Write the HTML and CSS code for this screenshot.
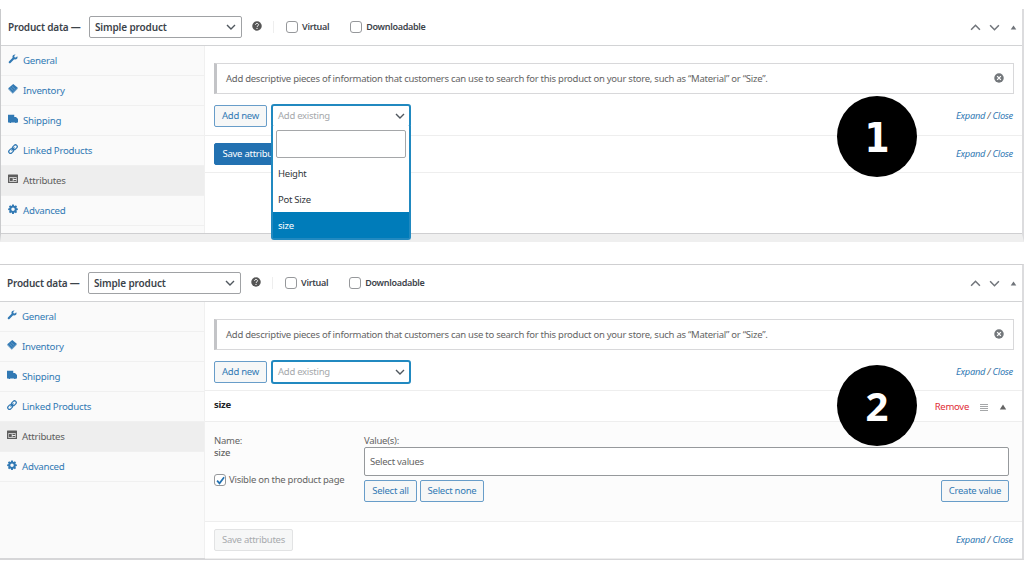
FILE: index.html
```
<!DOCTYPE html>
<html lang="en">
<head>
    <meta charset="UTF-8">
    <meta name="viewport" content="width=device-width, initial-scale=1.0">
    <title>Product data - Attributes</title>
    <link rel="stylesheet" href="styles.css">
</head>
<body>
    <!-- Shared icons -->
    <svg class="sprite" width="0" height="0">
        <symbol id="wrench" viewBox="0 0 20 20"><path d="M18.500 8.800c-1.700 2.200-4 2.700-6.200 1.900L5 18c-.8.800-2.300.8-3.100 0s-.8-2.300 0-3.100l7.300-7.300c-.8-2.200-.2-4.500 1.600-5.800C12 .8 13.700.5 15.200 1L12.400 4l.6 2.500 2.600.7L18.600 4.300c.6 1.500.7 3.200-.1 4.500z"/></symbol>
        <symbol id="tags" viewBox="0 0 20 20"><path d="M10.500 0L19.500 7.500 9.500 17.500.5 8.500z"/><path d="M.5 10.500l9 9 10-10v-2l-10 9-9-8z" opacity=".7"/><path d="M5 8l6 5.500M8 5l6 5.500" stroke="#fff" stroke-width="1" opacity=".5"/></symbol>
        <symbol id="truck" viewBox="0 0 20 20"><path d="M0 1.500h12.500V6h3.500l4 4v7h-2.500a2 2 0 0 1-3.500 0H6.500a2 2 0 0 1-3.500 0H0z"/></symbol>
        <symbol id="link" viewBox="0 0 20 20"><g fill="none" stroke="currentColor" stroke-width="2.500"><rect x="8.500" y="3" width="10.500" height="7" rx="3.500" transform="rotate(-45 13.700 6.500)"/><rect x="1" y="10.500" width="10.500" height="7" rx="3.500" transform="rotate(-45 6.300 14)"/><path d="M7 13l6-6"/></g></symbol>
        <symbol id="card" viewBox="0 0 20 20"><path fill-rule="evenodd" d="M1 1h18q1 0 1 1v15q0 1-1 1H1q-1 0-1-1V2q0-1 1-1zm1.500 5.500v9h15v-9z"/><path d="M3.500 8H9.500v6h-6zM11 8h5.500v2.200h-5.500zM11 12h5.500v2.200h-5.500z"/></symbol>
        <symbol id="gear" viewBox="0 0 20 20"><path fill-rule="evenodd" d="M8.300 1h3.400l.5 2.300 1.500.6 2-1.300 2.400 2.400-1.300 2 .6 1.500 2.300.5v3l-2.300.5-.6 1.500 1.300 2-2.400 2.400-2-1.300-1.500.6-.5 2.300H8.300l-.5-2.300-1.500-.6-2 1.300L1.900 16l1.300-2-.6-1.500L.3 12V9l2.300-.5L3.200 7l-1.300-2 2.400-2.400 2 1.300 1.500-.6zM10 6.800a3.500 3.500 0 1 0 0 7 3.500 3.500 0 0 0 0-7z"/></symbol>
        <symbol id="down" viewBox="0 0 10 10"><path d="M1 3l4 4 4-4" fill="none" stroke="currentColor" stroke-width="1.400"/></symbol>
        <symbol id="up" viewBox="0 0 10 10"><path d="M1 7l4-4 4 4" fill="none" stroke="currentColor" stroke-width="1.400"/></symbol>
        <symbol id="triangle" viewBox="0 0 10 10"><path d="M5 2l4 6H1z"/></symbol>
        <symbol id="help" viewBox="0 0 20 20"><circle cx="10" cy="10" r="9.500"/><path d="M7 7.800c0-4 6.300-3.800 6 0-.1 1.900-2.900 2-2.900 4" fill="none" stroke="#fff" stroke-width="1.900"/><circle cx="10" cy="14.900" r="1.200" fill="#fff"/></symbol>
        <symbol id="dismiss" viewBox="0 0 20 20"><circle cx="10" cy="10" r="9.500"/><path d="M6.300 6.300l7.400 7.400M13.700 6.300l-7.400 7.400" stroke="#fff" stroke-width="2.600"/></symbol>
        <symbol id="check" viewBox="0 0 10 10"><path d="M1.200 5.200l2.700 3L9 1.500" fill="none" stroke="currentColor" stroke-width="1.900"/></symbol>
    </svg>

    <div class="panel panel-first">
        <div class="panel-header">
            <span class="title">Product data —</span>
            <div class="select type-select">Simple product <svg class="caret"><use href="#down"/></svg></div>
            <svg class="help"><use href="#help"/></svg>
            <label class="option"><span class="checkbox"></span>Virtual</label>
            <label class="option"><span class="checkbox"></span>Downloadable</label>
            <div class="handles">
                <svg><use href="#up"/></svg>
                <svg><use href="#down"/></svg>
                <svg class="toggle"><use href="#triangle"/></svg>
            </div>
        </div>
        <div class="panel-body">
            <ul class="tabs">
                <li><svg><use href="#wrench"/></svg>General</li>
                <li><svg><use href="#tags"/></svg>Inventory</li>
                <li><svg><use href="#truck"/></svg>Shipping</li>
                <li><svg><use href="#link"/></svg>Linked Products</li>
                <li class="active"><svg><use href="#card"/></svg>Attributes</li>
                <li><svg><use href="#gear"/></svg>Advanced</li>
            </ul>
            <div class="content">
                <div class="notice">
                    <span class="notice-text">Add descriptive pieces of information that customers can use to search for this product on your store, such as “Material” or “Size”.</span>
                    <svg><use href="#dismiss"/></svg>
                </div>
                <div class="toolbar">
                    <button class="btn add-new">Add new</button>
                    <div class="existing">
                        <div class="existing-label">Add existing <svg class="caret"><use href="#down"/></svg></div>
                        <div class="dropdown">
                            <div class="search"></div>
                            <div class="choice">Height</div>
                            <div class="choice">Pot Size</div>
                            <div class="choice highlighted">size</div>
                        </div>
                    </div>
                    <span class="expand"><a>Expand</a> / <a>Close</a></span>
                </div>
                <div class="toolbar save-bar">
                    <button class="btn primary">Save attributes</button>
                    <span class="expand"><a>Expand</a> / <a>Close</a></span>
                </div>
            </div>
        </div>
        <div class="step step-one">1</div>
    </div>

    <div class="panel panel-second">
        <div class="panel-header">
            <span class="title">Product data —</span>
            <div class="select type-select">Simple product <svg class="caret"><use href="#down"/></svg></div>
            <svg class="help"><use href="#help"/></svg>
            <label class="option"><span class="checkbox"></span>Virtual</label>
            <label class="option"><span class="checkbox"></span>Downloadable</label>
            <div class="handles">
                <svg><use href="#up"/></svg>
                <svg><use href="#down"/></svg>
                <svg class="toggle"><use href="#triangle"/></svg>
            </div>
        </div>
        <div class="panel-body">
            <ul class="tabs">
                <li><svg><use href="#wrench"/></svg>General</li>
                <li><svg><use href="#tags"/></svg>Inventory</li>
                <li><svg><use href="#truck"/></svg>Shipping</li>
                <li><svg><use href="#link"/></svg>Linked Products</li>
                <li class="active"><svg><use href="#card"/></svg>Attributes</li>
                <li><svg><use href="#gear"/></svg>Advanced</li>
            </ul>
            <div class="content">
                <div class="notice">
                    <span class="notice-text">Add descriptive pieces of information that customers can use to search for this product on your store, such as “Material” or “Size”.</span>
                    <svg><use href="#dismiss"/></svg>
                </div>
                <div class="toolbar">
                    <button class="btn add-new">Add new</button>
                    <div class="existing">
                        <div class="existing-label">Add existing <svg class="caret"><use href="#down"/></svg></div>
                    </div>
                    <span class="expand"><a>Expand</a> / <a>Close</a></span>
                </div>
                <div class="attribute-head">
                    <strong>size</strong>
                    <span class="remove">Remove</span>
                    <span class="drag"></span>
                    <svg><use href="#triangle"/></svg>
                </div>
                <div class="attribute-data">
                    <div class="name-col">
                        <div>Name:</div>
                        <div class="attr-name">size</div>
                        <label class="visible"><span class="checkbox"><svg><use href="#check"/></svg></span>Visible on the product page</label>
                    </div>
                    <div class="value-col">
                        <div>Value(s):</div>
                        <div class="values">Select values</div>
                        <div class="value-buttons">
                            <button class="btn select-all">Select all</button>
                            <button class="btn select-none">Select none</button>
                            <button class="btn create">Create value</button>
                        </div>
                    </div>
                </div>
                <div class="toolbar save-bar">
                    <button class="btn disabled">Save attributes</button>
                    <span class="expand"><a>Expand</a> / <a>Close</a></span>
                </div>
            </div>
        </div>
        <div class="step step-two">2</div>
    </div>
</body>
</html>
```
FILE: styles.css
```
* {
    box-sizing: border-box;
}

body {
    margin: 0;
    padding-top: 9px;
    height: 572px;
    overflow: hidden;
    background: #fff;
    font-family: "Noto Sans", "Open Sans", sans-serif;
    font-size: 9.5px;
    line-height: 12px;
    letter-spacing: -0.26px;
    color: #646464;
}

svg {
    fill: currentColor;
    flex: none;
}

.sprite {
    position: absolute;
}

.panel {
    position: relative;
    display: flex;
    flex-direction: column;
    width: 1024px;
    border-right: 2px solid #dcdcde;
}

.panel-first {
    height: 233px;
    border-left: 1px solid #c9cacc;
    border-bottom: 8px solid #efefef;
}

.panel-second {
    height: 296px;
    margin-top: 22px;
    border-top: 1px solid #cfcfd1;
    border-bottom: 2px solid #d6d6d8;
}

/* Header */
.panel-header {
    display: flex;
    align-items: center;
    height: 37px;
    flex: none;
    padding-left: 7px;
    border-bottom: 1px solid #d2d3d5;
    font-size: 9px;
    font-weight: 600;
    letter-spacing: -0.3px;
    color: #3c434a;
}

.title {
    width: 81px;
    font-size: 10px;
    letter-spacing: -0.2px;
    white-space: nowrap;
}

.select {
    display: flex;
    align-items: center;
    justify-content: space-between;
    border: 1px solid #a0a2a5;
    border-radius: 2px;
    background: #fff;
}

.type-select {
    width: 153px;
    height: 22px;
    padding: 0 5px;
    font-size: 10px;
    letter-spacing: -0.15px;
}

.caret {
    width: 10px;
    height: 10px;
    color: #50575e;
}

.help {
    width: 10px;
    height: 10px;
    margin: 0 11px 2px 10px;
    color: #555;
}

.option {
    display: flex;
    align-items: center;
    gap: 4px;
    margin-right: 21px;
}

.help + .option {
    padding-left: 12px;
    border-left: 1px solid #eee;
}

.checkbox {
    display: grid;
    place-items: center;
    width: 12px;
    height: 12px;
    border: 1px solid #96989b;
    border-radius: 3px;
    background: #fff;
}

.checkbox svg {
    width: 9px;
    height: 9px;
    color: #2271b1;
}

.handles {
    display: flex;
    align-items: center;
    gap: 8px;
    margin-left: auto;
    padding-right: 5px;
    color: #70747a;
}

.handles svg {
    width: 11px;
    height: 11px;
}

.handles .toggle {
    width: 7px;
    height: 7px;
    margin-left: 2px;
}

/* Tabs */
.panel-body {
    display: flex;
    flex: 1;
    min-height: 0;
}

.panel-first .panel-body {
    border-bottom: 1px solid #cfcfd1;
}

.tabs {
    width: 204px;
    flex: none;
    margin: 0;
    padding: 0;
    list-style: none;
    background: #fafafa;
    border-right: 1px solid #f0f0f0;
    font-size: 9.7px;
    color: #3179b4;
}

.panel-second .tabs {
    width: 205px;
}

.tabs li {
    display: flex;
    align-items: center;
    gap: 5px;
    height: 30px;
    padding-left: 7px;
    border-bottom: 1px solid #f0f0f0;
}

.tabs svg {
    width: 10px;
    height: 10px;
    margin-bottom: 3px;
}

.tabs .active {
    background: #eee;
    color: #5d5d5d;
}

/* Attributes */
.content {
    flex: 1;
    min-width: 0;
    padding-top: 17px;
}

.notice {
    display: flex;
    align-items: center;
    justify-content: space-between;
    height: 31px;
    margin: 0 8px 0 9px;
    padding: 0 9px 0 9px;
    border: 1px solid #d8d8da;
    border-left: 3px solid #c3c4c7;
}

.notice svg {
    width: 10px;
    height: 10px;
    margin-bottom: 1px;
    color: #73777b;
}

.toolbar {
    display: flex;
    align-items: center;
    height: 42px;
    padding: 2px 9px 0;
    border-bottom: 1px solid #eee;
}

.panel-second .toolbar {
    height: 41px;
    padding-top: 3px;
}

.btn {
    height: 22px;
    padding: 0;
    border: 1px solid #689dc9;
    border-radius: 2px;
    background: #f6f7f7;
    color: #3179b4;
    font: inherit;
    letter-spacing: inherit;
    text-align: center;
    white-space: nowrap;
}

.add-new,
.select-all {
    width: 53px;
}

.select-none {
    width: 64px;
}

.existing {
    position: relative;
    width: 140px;
    height: 24px;
    margin-left: 4px;
    border: 2px solid #2189c0;
    border-radius: 3px;
    background: #fff;
}

.existing-label {
    display: flex;
    align-items: center;
    justify-content: space-between;
    height: 20px;
    padding: 0 4px 0 5px;
    color: #a5a8ab;
}

.dropdown {
    position: absolute;
    z-index: 1;
    top: 20px;
    left: -2px;
    width: 140px;
    padding-top: 4px;
    border: 2px solid #2189c0;
    border-top: none;
    border-radius: 0 0 3px 3px;
    background: #fff;
    color: #32373c;
}

.search {
    height: 28px;
    margin: 0 3px 2px;
    border: 1px solid #a5a7a9;
    border-radius: 2px;
}

.choice {
    height: 26px;
    padding-left: 5px;
    line-height: 28px;
}

.highlighted {
    background: #007cba;
    color: #fff;
}

.expand {
    margin-left: auto;
    font-size: 9.3px;
    font-style: italic;
}

.expand a {
    color: #3179b4;
}

.save-bar,
.panel-second .save-bar {
    height: 37px;
    padding-top: 0;
}

.primary {
    width: 80px;
    background: #2271b1;
    border-color: #2271b1;
    color: #fff;
}

.disabled {
    width: 79px;
    border-color: #e2e3e4;
    color: #a7aaad;
}

.attribute-head {
    display: flex;
    align-items: center;
    height: 31px;
    padding: 2px 15px 0 9px;
    border-bottom: 1px solid #eee;
}

.attribute-head strong {
    margin-bottom: 4px;
    color: #1d2327;
}

.remove {
    margin-left: auto;
    color: #e02b35;
}

.drag {
    width: 8px;
    height: 7px;
    margin: 0 11px;
    background: repeating-linear-gradient(#a5a7a9 0 1px, #fff 1px 2px);
}

.attribute-head svg {
    width: 8px;
    height: 8px;
}

.attribute-data {
    display: flex;
    height: 100px;
    padding: 13px 13px 0 9px;
    background: #fcfcfc;
    border-bottom: 1px solid #eee;
}

.name-col {
    width: 150px;
    flex: none;
    white-space: nowrap;
}

.attr-name {
    font-weight: 500;
}

.visible {
    display: flex;
    align-items: center;
    gap: 3px;
    margin-top: 15px;
}

.value-col {
    flex: 1;
}

.values {
    display: flex;
    align-items: center;
    height: 29px;
    padding-left: 5px;
    border: 1px solid #96999c;
    border-radius: 2px;
    background: #fff;
}

.value-buttons {
    display: flex;
    gap: 3px;
    margin-top: 4px;
}

.create {
    width: 68px;
    margin-left: auto;
}

/* Step numbers */
.step {
    position: absolute;
    z-index: 2;
    left: 837px;
    display: grid;
    place-items: center;
    width: 80px;
    height: 81px;
    border-radius: 50%;
    background: #000;
    color: #fff;
    font-size: 40px;
    line-height: 40px;
    font-weight: 700;
    letter-spacing: 0;
}

.step-one {
    top: 87px;
    left: 836px;
    padding-top: 2px;
    font-family: "DejaVu Sans Condensed", "DejaVu Sans", sans-serif;
    font-stretch: condensed;
}

.step-two {
    top: 100px;
}
```
